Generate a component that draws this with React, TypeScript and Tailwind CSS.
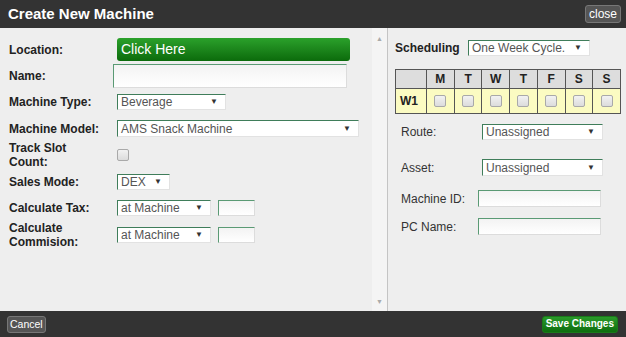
import React from "react";

const font = { fontFamily: '"Liberation Sans", Arial, sans-serif' };

function Select({ value, className }: { value: string; className: string }) {
  return (
    <div
      className={`flex items-center justify-between border border-t-[#3f7d5a] border-l-[#3f7d5a] border-r-[#e2e2e2] border-b-[#e2e2e2] bg-white pl-[3px] pr-[7px] text-[12px] text-[#555] ${className}`}
    >
      <span className="leading-none">{value}</span>
      <span className="text-[8px] leading-none text-[#333]">▼</span>
    </div>
  );
}

function TextBox({ className }: { className: string }) {
  return (
    <div
      className={`border border-t-[#5a9a74] border-l-[#5a9a74] border-r-[#dcdcdc] border-b-[#dcdcdc] bg-gradient-to-b from-[#f3f3f3] to-white ${className}`}
    />
  );
}

function Check() {
  return (
    <div className="h-[12px] w-[12px] rounded-[2px] border border-[#a9a9a9] bg-gradient-to-b from-[#f2f2f2] to-[#dcdcdc]" />
  );
}

function Row({
  label,
  h,
  mt,
  children,
}: {
  label: React.ReactNode;
  h: string;
  mt: string;
  children: React.ReactNode;
}) {
  return (
    <div className={`flex items-center ${h} ${mt}`}>
      <div className="w-[108px] shrink-0 text-[12px] font-bold leading-[14px] text-[#222]">
        {label}
      </div>
      {children}
    </div>
  );
}

function SideRow({
  label,
  lw,
  h,
  mt,
  children,
}: {
  label: string;
  lw: string;
  h: string;
  mt: string;
  children: React.ReactNode;
}) {
  return (
    <div className={`ml-[6px] flex items-center ${h} ${mt}`}>
      <div className={`${lw} shrink-0 text-[12px] leading-none text-[#333]`}>{label}</div>
      {children}
    </div>
  );
}

export default function App() {
  const days = ["M", "T", "W", "T", "F", "S", "S"];
  return (
    <div className="flex h-[337px] w-[626px] flex-col bg-[#eeeeee]" style={font}>
      {/* title bar */}
      <div className="flex h-[28px] shrink-0 items-center justify-between bg-[#333333] pl-[8px] pr-[5px]">
        <span className="text-[15px] font-bold text-white">Create New Machine</span>
        <button className="h-[18px] rounded-[3px] border border-[#777] bg-[#555] px-[3px] text-[12px] leading-none text-white">
          close
        </button>
      </div>

      {/* body */}
      <div className="flex min-h-0 flex-1">
        <div className="flex w-[372px] shrink-0 flex-col pl-[9px] pt-[10px]">
          <Row label="Location:" h="h-[23px]" mt="mt-0">
            <div className="flex h-[23px] w-[233px] items-center rounded-[3px] bg-gradient-to-b from-[#2ba12b] to-[#0b6b0b] pl-[4px] text-[14px] text-white">
              Click Here
            </div>
          </Row>
          <Row label="Name:" h="h-[24px]" mt="mt-[3px]">
            <TextBox className="-ml-[4px] h-[24px] w-[234px]" />
          </Row>
          <Row label="Machine Type:" h="h-[16px]" mt="mt-[6px]">
            <Select value="Beverage" className="h-[16px] w-[109px]" />
          </Row>
          <Row label="Machine Model:" h="h-[17px]" mt="mt-[10px]">
            <Select value="AMS Snack Machine" className="h-[17px] w-[242px]" />
          </Row>
          <Row
            label={
              <>
                Track Slot
                <br />
                Count:
              </>
            }
            h="h-[28px]"
            mt="mt-[4px]"
          >
            <Check />
          </Row>
          <Row label="Sales Mode:" h="h-[16px]" mt="mt-[5px]">
            <Select value="DEX" className="h-[16px] w-[53px]" />
          </Row>
          <Row label="Calculate Tax:" h="h-[16px]" mt="mt-[10px]">
            <Select value="at Machine" className="h-[16px] w-[94px]" />
            <TextBox className="ml-[7px] h-[16px] w-[37px]" />
          </Row>
          <Row
            label={
              <>
                Calculate
                <br />
                Commision:
              </>
            }
            h="h-[28px]"
            mt="mt-[5px]"
          >
            <Select value="at Machine" className="h-[16px] w-[94px]" />
            <TextBox className="ml-[7px] h-[16px] w-[37px]" />
          </Row>
        </div>

        {/* scroll track */}
        <div className="flex w-[15px] shrink-0 flex-col items-center justify-between bg-[#f4f4f4] pb-[6px] pt-[7px]">
          <span className="text-[7px] leading-none text-[#aaa]">▲</span>
          <span className="text-[7px] leading-none text-[#aaa]">▼</span>
        </div>

        {/* right pane */}
        <div className="flex flex-1 flex-col border-l border-[#c4c4c4] pl-[7px] pt-[12px]">
          <div className="flex h-[16px] items-center">
            <span className="w-[73px] text-[12px] font-bold text-[#222]">Scheduling</span>
            <Select value="One Week Cycle." className="h-[16px] w-[122px]" />
          </div>

          <table className="mt-[13px] w-[226px] table-fixed border-collapse text-[12px] font-bold text-[#222]">
            <colgroup>
              <col className="w-[31px]" />
              {days.map((_, i) => (
                <col key={i} />
              ))}
            </colgroup>
            <thead>
              <tr className="h-[18px] bg-[#dddddd]">
                <th className="border border-[#555]" />
                {days.map((d, i) => (
                  <th key={i} className="border border-[#555] text-center">
                    {d}
                  </th>
                ))}
              </tr>
            </thead>
            <tbody>
              <tr className="h-[25px] bg-[#fbfbc2]">
                <td className="border border-[#555] pl-[4px]">W1</td>
                {days.map((_, i) => (
                  <td key={i} className="border border-[#555]">
                    <div className="flex justify-center">
                      <Check />
                    </div>
                  </td>
                ))}
              </tr>
            </tbody>
          </table>

          <SideRow label="Route:" lw="w-[81px]" h="h-[16px]" mt="mt-[10px]">
            <Select value="Unassigned" className="h-[16px] w-[121px]" />
          </SideRow>
          <SideRow label="Asset:" lw="w-[81px]" h="h-[17px]" mt="mt-[19px]">
            <Select value="Unassigned" className="h-[17px] w-[121px]" />
          </SideRow>
          <SideRow label="Machine ID:" lw="w-[77px]" h="h-[17px]" mt="mt-[14px]">
            <TextBox className="h-[17px] w-[123px]" />
          </SideRow>
          <SideRow label="PC Name:" lw="w-[77px]" h="h-[17px]" mt="mt-[11px]">
            <TextBox className="h-[17px] w-[123px]" />
          </SideRow>
        </div>
      </div>

      {/* footer */}
      <div className="flex h-[26px] shrink-0 items-center justify-between bg-[#333333] pl-[7px] pr-[8px]">
        <button className="h-[17px] rounded-[3px] border border-[#777] bg-[#555] px-[2px] text-[10.5px] leading-none text-white">
          Cancel
        </button>
        <button className="h-[17px] rounded-[3px] border border-[#1a7a1a] bg-gradient-to-b from-[#2a9a2a] to-[#0d6e0d] px-[3px] text-[10px] font-bold leading-none text-white">
          Save Changes
        </button>
      </div>
    </div>
  );
}
